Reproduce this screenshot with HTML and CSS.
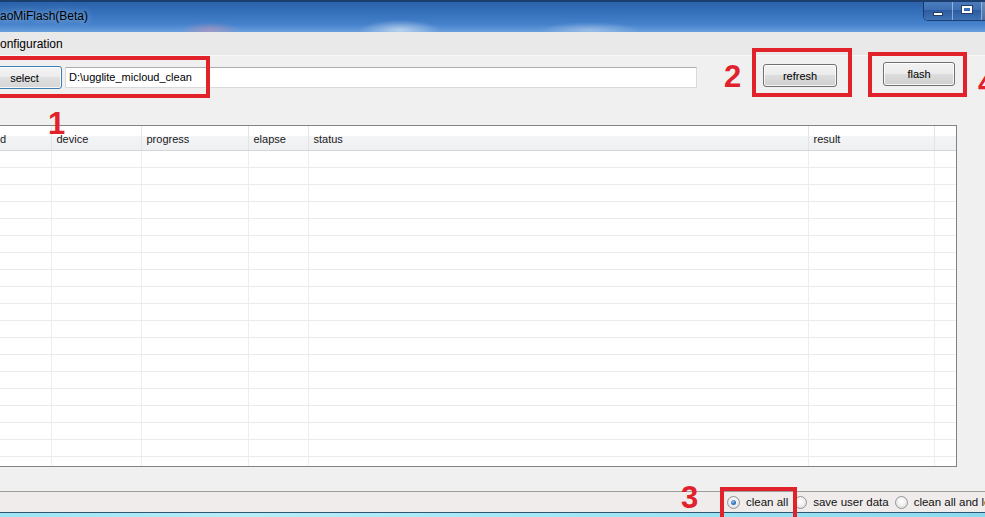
FILE: index.html
```html
<!DOCTYPE html>
<html>
<head>
<meta charset="utf-8">
<link rel="stylesheet" href="styles.css">
</head>
<body>
<div class="window">
  <div class="titlebar">
    <span class="title">aoMiFlash(Beta)</span>
    <div class="winctl">
      <span class="wbtn"><i class="g-min"></i></span>
      <span class="wbtn"><i class="g-max"></i></span>
      <span class="wbtn close"></span>
    </div>
  </div>
  <div class="menubar"><span class="menuitem">onfiguration</span></div>
  <div class="toolbar">
    <button class="btn select">select</button>
    <div class="path">D:\ugglite_micloud_clean</div>
    <button class="btn refresh">refresh</button>
    <button class="btn flash">flash</button>
  </div>
  <div class="gridwrap">
    <table class="grid">
      <colgroup>
        <col class="c1"><col class="c2"><col class="c3"><col class="c4"><col class="c5"><col class="c6"><col class="c7">
      </colgroup>
      <thead>
        <tr><th class="first">d</th><th>device</th><th>progress</th><th>elapse</th><th>status</th><th>result</th><th></th></tr>
      </thead>
      <tbody>
        <tr><td></td><td></td><td></td><td></td><td></td><td></td><td></td></tr>
        <tr><td></td><td></td><td></td><td></td><td></td><td></td><td></td></tr>
        <tr><td></td><td></td><td></td><td></td><td></td><td></td><td></td></tr>
        <tr><td></td><td></td><td></td><td></td><td></td><td></td><td></td></tr>
        <tr><td></td><td></td><td></td><td></td><td></td><td></td><td></td></tr>
        <tr><td></td><td></td><td></td><td></td><td></td><td></td><td></td></tr>
        <tr><td></td><td></td><td></td><td></td><td></td><td></td><td></td></tr>
        <tr><td></td><td></td><td></td><td></td><td></td><td></td><td></td></tr>
        <tr><td></td><td></td><td></td><td></td><td></td><td></td><td></td></tr>
        <tr><td></td><td></td><td></td><td></td><td></td><td></td><td></td></tr>
        <tr><td></td><td></td><td></td><td></td><td></td><td></td><td></td></tr>
        <tr><td></td><td></td><td></td><td></td><td></td><td></td><td></td></tr>
        <tr><td></td><td></td><td></td><td></td><td></td><td></td><td></td></tr>
        <tr><td></td><td></td><td></td><td></td><td></td><td></td><td></td></tr>
        <tr><td></td><td></td><td></td><td></td><td></td><td></td><td></td></tr>
        <tr><td></td><td></td><td></td><td></td><td></td><td></td><td></td></tr>
        <tr><td></td><td></td><td></td><td></td><td></td><td></td><td></td></tr>
        <tr><td></td><td></td><td></td><td></td><td></td><td></td><td></td></tr>
        <tr><td></td><td></td><td></td><td></td><td></td><td></td><td></td></tr>
        <tr><td></td><td></td><td></td><td></td><td></td><td></td><td></td></tr>
      </tbody>
    </table>
  </div>
  <div class="spacer"></div>
  <div class="statusbar">
    <div class="options">
      <label class="opt"><span class="radio checked"></span>clean all</label>
      <label class="opt"><span class="radio"></span>save user data</label>
      <label class="opt"><span class="radio"></span>clean all and lock</label>
    </div>
  </div>
  <div class="framebottom"></div>

  <div class="ann-box b1"></div>
  <div class="ann-box b2"></div>
  <div class="ann-box b3"></div>
  <div class="ann-box b4"></div>
  <span class="ann-num n1">1</span>
  <span class="ann-num n2">2</span>
  <span class="ann-num n3">3</span>
  <span class="ann-num n4">4</span>
</div>
</body>
</html>
```
FILE: styles.css
```css
html, body {
  margin: 0;
  padding: 0;
}
body {
  width: 985px;
  height: 517px;
  overflow: hidden;
  background: #f0f0f0;
  font-family: "Liberation Sans", Arial, sans-serif;
  font-size: 11px;
  color: #000;
}
.window {
  position: relative;
  height: 517px;
  display: flex;
  flex-direction: column;
  overflow: hidden;
}

/* title bar */
.titlebar {
  flex: none;
  height: 32px;
  box-sizing: border-box;
  border-top: 2px solid #1c3e6e;
  display: flex;
  align-items: flex-start;
  overflow: hidden;
  background:
    radial-gradient(ellipse 40px 10px at 400px 28px, rgba(255,255,255,0.55), rgba(255,255,255,0) 100%),
    radial-gradient(ellipse 30px 8px at 210px 28px, rgba(230,150,170,0.45), rgba(255,255,255,0) 100%),
    radial-gradient(ellipse 50px 8px at 590px 28px, rgba(255,255,255,0.35), rgba(255,255,255,0) 100%),
    linear-gradient(180deg, #2b62aa 0%, #3571bb 35%, #4682cc 75%, #6a9fdc 100%);
}
.title {
  font-size: 12px;
  line-height: 28px;
  color: #000;
  text-shadow: 0 0 6px rgba(255,255,255,0.6);
}
.winctl {
  margin-left: auto;
  margin-top: -2px;
  display: flex;
  flex: none;
  height: 21px;
  box-sizing: border-box;
  border: 1px solid rgba(20,45,90,0.8);
  border-top: none;
  border-right: none;
  border-radius: 0 0 0 5px;
  overflow: hidden;
  box-shadow: inset 0 0 0 1px rgba(255,255,255,0.35);
}
.wbtn {
  width: 28px;
  height: 20px;
  display: flex;
  align-items: center;
  justify-content: center;
  background: linear-gradient(180deg, #4d7fc0 0%, #3d6fb2 50%, #2c5c9f 51%, #3e73b6 100%);
  border-right: 1px solid rgba(200,220,245,0.6);
}
.wbtn.close {
  width: 3px;
  border-right: none;
  background: linear-gradient(180deg, #6f8fbd 0%, #4a6ea3 100%);
}
.g-min {
  display: block;
  width: 8px;
  height: 2px;
  margin-top: 7px;
  background: #fff;
  border: 1px solid #283e5e;
}
.g-max {
  display: block;
  width: 6px;
  height: 3px;
  margin-top: -1px;
  border: 2px solid #fff;
  outline: 1px solid #283e5e;
}

/* menu */
.menubar {
  flex: none;
  height: 24px;
  box-sizing: border-box;
  background: #e9e9e9;
  border-bottom: 1px solid #f7f7f7;
  display: flex;
  align-items: center;
}
.menuitem {
  font-size: 12px;
  line-height: 16px;
}

/* toolbar */
.toolbar {
  flex: none;
  height: 69px;
  display: flex;
  align-items: flex-start;
}
.btn {
  box-sizing: border-box;
  font-family: "Liberation Sans", Arial, sans-serif;
  font-size: 11px;
  color: #000;
  padding: 0;
  border: 1px solid #707070;
  border-radius: 3px;
  background: linear-gradient(180deg, #f2f2f2 0%, #ebebeb 49%, #dddddd 50%, #cfcfcf 100%);
  box-shadow: inset 0 0 0 1px rgba(255,255,255,0.8);
}
.btn.select {
  width: 75px;
  height: 23px;
  margin-left: -13px;
  margin-top: 10px;
  border-color: #3c7fb1;
  background: linear-gradient(180deg, #f4f4f4 0%, #ececec 49%, #e0e0e0 50%, #d6d6d6 100%);
}
.path {
  box-sizing: border-box;
  width: 632px;
  height: 21px;
  margin-left: 3px;
  margin-top: 11px;
  background: #fff;
  border: 1px solid #d9dadc;
  border-top-color: #abadb3;
  padding-left: 3px;
  line-height: 19px;
  font-size: 11px;
}
.btn.refresh {
  width: 74px;
  height: 23px;
  margin-left: 66px;
  margin-top: 8px;
}
.btn.flash {
  width: 72px;
  height: 24px;
  margin-left: 46px;
  margin-top: 6px;
}

/* grid */
.gridwrap {
  flex: none;
  height: 342px;
  width: 958px;
  margin-left: -1px;
  box-sizing: border-box;
  border: 1px solid #838383;
  background: #fff;
  overflow: hidden;
}
.grid {
  border-collapse: collapse;
  table-layout: fixed;
  width: 956px;
}
.c1 { width: 51px; }
.c2 { width: 90px; }
.c3 { width: 107px; }
.c4 { width: 60px; }
.c5 { width: 500px; }
.c6 { width: 126px; }
.c7 { width: 22px; }
.grid th {
  height: 23px;
  padding: 1px 0 0 5px;
  text-align: left;
  font-weight: normal;
  font-size: 11px;
  color: #1a1a1a;
  background: linear-gradient(180deg, #ffffff 0%, #ffffff 40%, #f3f4f6 41%, #eef0f2 100%);
  border-right: 1px solid #e3e4e6;
  border-bottom: 1px solid #d5d5d5;
}
.grid th.first {
  padding-left: 0;
}
.grid th:last-child {
  border-right: none;
}
.grid td {
  height: 16px;
  padding: 0;
  border-right: 1px solid #eeeeee;
  border-bottom: 1px solid #ebebeb;
}
.grid td:last-child {
  border-right: none;
}

.spacer {
  flex: 1;
}

/* status strip */
.statusbar {
  flex: none;
  height: 21px;
  box-sizing: border-box;
  border-top: 1px solid #9c9c9c;
  background: #f0ecec;
  display: flex;
  align-items: center;
}
.options {
  margin-left: 727px;
  display: flex;
  align-items: center;
  white-space: nowrap;
}
.opt {
  display: flex;
  align-items: center;
  font-size: 11.5px;
  color: #111;
  margin-right: 6px;
}
.radio {
  box-sizing: border-box;
  width: 13px;
  height: 13px;
  border-radius: 50%;
  border: 1px solid #959595;
  background: radial-gradient(circle at 50% 40%, #ffffff 0%, #f0f0f0 45%, #d5d5d5 100%);
  margin-right: 6px;
  display: flex;
  align-items: center;
  justify-content: center;
}
.radio.checked::after {
  content: "";
  width: 5px;
  height: 5px;
  border-radius: 50%;
  background: radial-gradient(circle at 40% 35%, #8ec6f2 0%, #2d6cb8 60%, #1b4c8c 100%);
}

.framebottom {
  flex: none;
  height: 5px;
  box-sizing: border-box;
  border-top: 1px solid #2f5572;
  background: linear-gradient(90deg, #9ee4f4 0%, #b6eef8 25%, #a2e6f5 60%, #8cd9ee 100%);
}

/* annotations */
.ann-box {
  position: absolute;
  box-sizing: border-box;
  border: 4px solid #e1222b;
}
.b1 { left: -10px; top: 56px; width: 220px; height: 42px; }
.b2 { left: 752px; top: 48px; width: 100px; height: 49px; }
.b3 { left: 868px; top: 52px; width: 99px; height: 45px; }
.b4 { left: 720px; top: 487px; width: 77px; height: 40px; }
.ann-num {
  position: absolute;
  font-family: "Liberation Sans", Arial, sans-serif;
  font-weight: bold;
  font-size: 31px;
  line-height: 1;
  color: #e1222b;
}
.n1 { left: 48px; top: 108px; }
.n2 { left: 724px; top: 61px; }
.n3 { left: 681px; top: 482px; }
.n4 { left: 978px; top: 68px; }
```
